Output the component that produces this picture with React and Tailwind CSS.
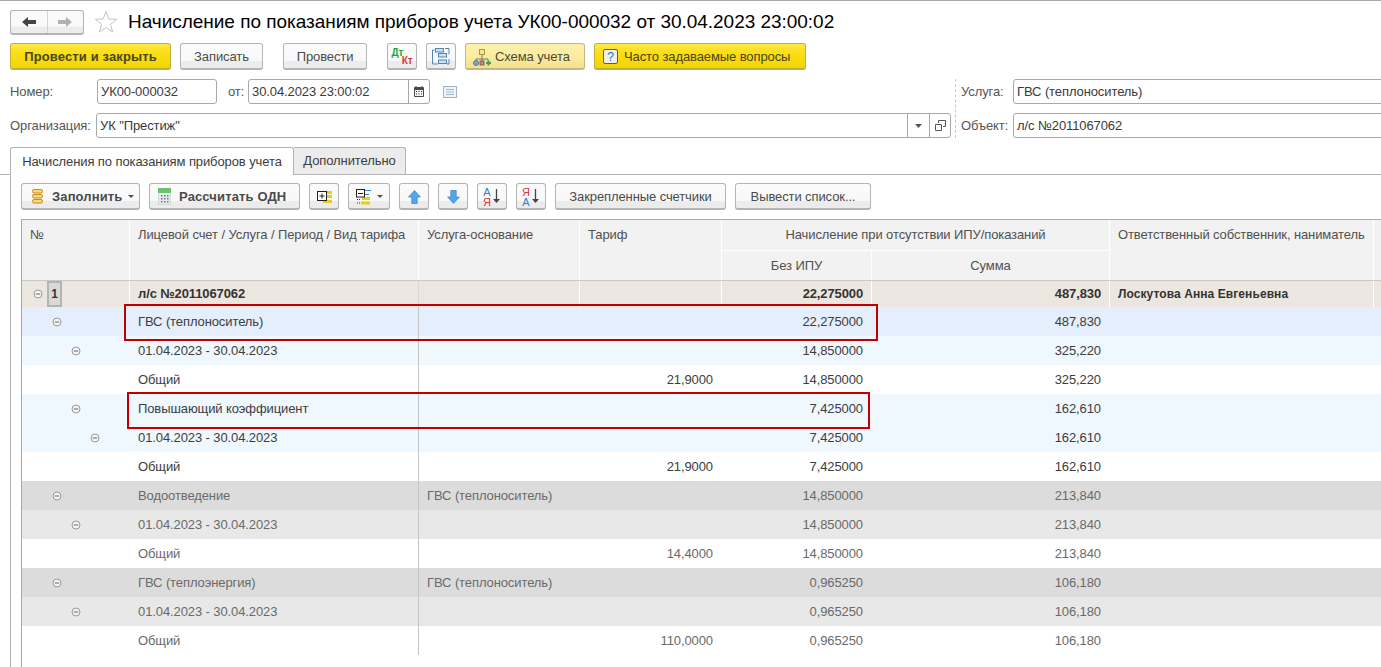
const F = "font-['Liberation_Sans',Arial,sans-serif]";

const Btn = ({ w, children, kind = "n", ml = "", bold = false, pad = "justify-center", gap = "gap-2" }) => {
  const k = {
    n: "bg-[linear-gradient(#fbfbfb_0%,#f8f8f8_70%,#ececec_72%,#ececec_100%)] border-[#b4b4b4] text-[#4a4a4a]",
    y: "bg-[linear-gradient(#ffe94a_0%,#fbe01a_30%,#f2d500_100%)] border-[#c2ad3a] text-[#4a4420]",
    l: "bg-[linear-gradient(#fdf0ac_0%,#fbeca0_50%,#f5e08c_100%)] border-[#c0b888] text-[#4a4a3a]",
  }[kind];
  return (
    <div className={`h-[27px] ${w} ${ml} ${k} ${pad} ${gap} flex items-center pt-[1px] shrink-0 rounded-[3px] border border-b-2 text-[13px] whitespace-nowrap ${bold ? "font-bold tracking-[0.13px]" : ""}`}>
      {children}
    </div>
  );
};

const Minus = ({ x }) => (
  <svg width="10" height="10" viewBox="0 0 10 10" className="shrink-0" style={{ marginLeft: x }}>
    <circle cx="5" cy="5" r="4" fill="#f4f4f4" stroke="#9a9a9a" strokeWidth="1" />
    <path d="M2.8 5h4.400" stroke="#666" strokeWidth="1" />
  </svg>
);

const Back = ({ c, flip }) => (
  <svg width="14" height="10" viewBox="0 0 14 10" style={flip ? { transform: "scaleX(-1)" } : undefined}>
    <path d="M0 5 6 0v3h8v4H6v3z" fill={c} />
  </svg>
);

const Star = () => (
  <svg width="24" height="24" viewBox="0 0 24 24" className="shrink-0">
    <path d="M12 1.500 14.800 9l8 .3-6.300 5 2.200 7.700L12 17.500 5.300 22l2.200-7.700-6.300-5 8-.3z" fill="#fff" stroke="#c4c4c4" strokeWidth="1" />
  </svg>
);

const TreeDoc = () => (
  <svg width="18" height="17" viewBox="0 0 18 17">
    <g fill="#cfe0f0" stroke="#4f86b8" strokeWidth="1">
      <rect x="3.500" y="0.500" width="8" height="3.500" />
      <rect x="6.500" y="5.500" width="8" height="3.500" />
      <rect x="6.500" y="12" width="8" height="3.500" />
    </g>
    <path d="M2.500 2H.5v14h5M13 .5h4v6M17 11v5h-2" stroke="#4f86b8" fill="none" />
  </svg>
);

const Scheme = () => (
  <svg width="18" height="18" viewBox="0 0 18 18" className="shrink-0">
    <path d="M9 7v4M3 13v-2h12v2M9 11v2" stroke="#777" fill="none" />
    <rect x="6.500" y="1.500" width="5" height="5" fill="#f7e68a" stroke="#a59a50" />
    <circle cx="3" cy="15" r="2.500" fill="#7ba3c9" stroke="#55799b" />
    <rect x="7" y="13" width="4" height="4" fill="#c58a72" stroke="#8a5f4e" />
    <path d="M13 15h5M15.500 12.500v5" stroke="#3aa35a" strokeWidth="2" />
  </svg>
);

const Help = () => (
  <div className="w-[15px] h-[15px] shrink-0 rounded-[2px] border border-[#5c5c5c] bg-[#f1efe6] flex items-center justify-center text-[12px] text-[#1a6fc4] leading-none">?</div>
);

const Calendar = () => (
  <svg width="10" height="11" viewBox="0 0 10 11">
    <rect x="0" y="1" width="10" height="10" rx="1" fill="#4a4a4a" />
    <path d="M2 0v2M8 0v2" stroke="#4a4a4a" strokeWidth="1" />
    <rect x="1" y="4" width="8" height="6" fill="#f4f4f4" />
    <path d="M2 5h1v1H2zM4.500 5h1v1h-1zM7 5h1v1H7zM2 7.500h1v1H2zM4.500 7.500h1v1h-1zM7 7.500h1v1H7z" fill="#333" />
  </svg>
);

const Note = () => (
  <svg width="14" height="12" viewBox="0 0 14 12">
    <rect x="0.500" y="0.500" width="13" height="11" fill="#f0f5fa" stroke="#9db6cc" />
    <path d="M3 3.500h8M3 6h8M3 8.500h8" stroke="#9db6cc" />
  </svg>
);

const Stack = () => (
  <svg width="11" height="15" viewBox="0 0 11 15" className="shrink-0">
    {[0.5, 5.5, 10.5].map((y) => (
      <rect key={y} x="0.500" y={y} width="10" height="3.500" rx="1.500" fill="#f6dc6a" stroke="#c88a2b" />
    ))}
  </svg>
);

const Calc = () => (
  <svg width="13" height="17" viewBox="0 0 13 17" className="shrink-0">
    <rect x="0" y="0" width="13" height="17" fill="#e4e8ea" stroke="#a8b0b4" strokeWidth="0.500" />
    <rect x="0" y="0" width="13" height="5" fill="#6fc06f" />
    <path d="M3 7h1.500v1.500H3zM6 7h1.500v1.500H6zM9 7h1.500v1.500H9zM3 10h1.500v1.500H3zM6 10h1.500v1.500H6zM9 10h1.500v1.500H9zM3 13h1.500v1.500H3zM6 13h1.500v1.500H6zM9 13h1.500v1.500H9z" fill="#777" />
  </svg>
);

const Expand = () => (
  <svg width="15" height="12" viewBox="0 0 15 12">
    <path d="M10 0h5v3h-5zM10 4h5v3h-5zM6 9h9v3H6z" fill="#e8cf10" />
    <rect x="0.500" y="0.500" width="9" height="9" fill="#fff" stroke="#222" />
    <path d="M2.500 5h5M5 2.500v5" stroke="#222" />
  </svg>
);

const Collapse = () => (
  <svg width="15" height="16" viewBox="0 0 15 16">
    <path d="M9 1.500h6M9 5.500h4" stroke="#3f85c9" />
    <path d="M6 8h8v3H6zM5 12.500h9v3H5z" fill="#e8cf10" />
    <rect x="0.500" y="0.500" width="8" height="7.500" fill="#fff" stroke="#222" />
    <path d="M2 4.500h5" stroke="#222" />
    <path d="M1 10.500h3M1 14h3" stroke="#333" strokeDasharray="1 1" />
  </svg>
);

const Arrow = ({ down }) => (
  <svg width="13" height="14" viewBox="0 0 12 13" style={down ? { transform: "scaleY(-1)" } : undefined}>
    <path d="M6 .5 11.500 6.500H8.500V12.500H3.500V6.500H.5z" fill="#52a7ea" stroke="#3d87c8" strokeWidth="0.700" />
  </svg>
);

const Sort = ({ top, bottom, topC, botC }) => (
  <div className="flex items-center gap-[1px]">
    <div className="flex flex-col items-center text-[11px] leading-[10px] font-normal">
      <span className={topC}>{top}</span>
      <span className={botC}>{bottom}</span>
    </div>
    <svg width="9" height="15" viewBox="0 0 9 15">
      <path d="M4.500 0v10" stroke="#444" strokeWidth="1.300" />
      <path d="M1 10h7l-3.500 4z" fill="#444" />
    </svg>
  </div>
);

const Field = ({ w, children, ml = "" }) => (
  <div className={`${w} ${ml} h-[25px] shrink-0 flex items-center rounded-[3px] border border-[#a9a9a9] bg-white text-[13px] text-[#3a3a3a] overflow-hidden`}>
    {children}
  </div>
);

const Label = ({ w, children }) => (
  <div className={`${w} shrink-0 text-[13px] text-[#555] whitespace-nowrap`}>{children}</div>
);

const W = ["w-[108px]", "w-[289px]", "w-[161px]", "w-[142px]", "w-[150px]", "w-[238px]", "w-[264px]", "w-[20px]"];

const rows = [
  { h: "h-[26px]", bg: "bg-[#ebe7e0]", c: "text-[#333]", bold: true, l: "л/с №2011067062", x: 11, box: true, b: "22,275000", s: "487,830", o: "Лоскутова Анна Евгеньевна", split: true },
  { bg: "bg-[#e4eefd]", c: "text-[#3d3d3d]", x: 30, l: "ГВС (теплоноситель)", b: "22,275000", s: "487,830" },
  { bg: "bg-[#eff7ff]", c: "text-[#3d3d3d]", x: 49, l: "01.04.2023 - 30.04.2023", b: "14,850000", s: "325,220" },
  { bg: "bg-white", c: "text-[#3d3d3d]", l: "Общий", t: "21,9000", b: "14,850000", s: "325,220" },
  { bg: "bg-[#eff7ff]", c: "text-[#3d3d3d]", x: 49, l: "Повышающий коэффициент", b: "7,425000", s: "162,610" },
  { bg: "bg-[#eff7ff]", c: "text-[#3d3d3d]", x: 68, l: "01.04.2023 - 30.04.2023", b: "7,425000", s: "162,610" },
  { bg: "bg-white", c: "text-[#3d3d3d]", l: "Общий", t: "21,9000", b: "7,425000", s: "162,610" },
  { bg: "bg-[#dcdcdc]", c: "text-[#6a6a6a]", x: 30, l: "Водоотведение", base: "ГВС (теплоноситель)", b: "14,850000", s: "213,840" },
  { bg: "bg-[#e8e8e8]", c: "text-[#6a6a6a]", x: 49, l: "01.04.2023 - 30.04.2023", b: "14,850000", s: "213,840" },
  { bg: "bg-white", c: "text-[#6a6a6a]", l: "Общий", t: "14,4000", b: "14,850000", s: "213,840" },
  { bg: "bg-[#dcdcdc]", c: "text-[#6a6a6a]", x: 30, l: "ГВС (теплоэнергия)", base: "ГВС (теплоноситель)", b: "0,965250", s: "106,180" },
  { bg: "bg-[#e8e8e8]", c: "text-[#6a6a6a]", x: 49, l: "01.04.2023 - 30.04.2023", b: "0,965250", s: "106,180" },
  { bg: "bg-white", c: "text-[#6a6a6a]", l: "Общий", t: "110,0000", b: "0,965250", s: "106,180" },
];

const Row = ({ r }) => {
  const line = r.split ? "border-r border-white" : "";
  const pr = r.split ? "pr-[8px]" : "pr-[9px]";
  return (
    <div className={`flex ${r.h || "h-[29px]"} ${r.bg} ${r.c} ${r.bold ? "font-bold tracking-[-0.12px]" : ""} items-stretch whitespace-nowrap text-[13px]`}>
      <div className={`${W[0]} shrink-0 flex items-center ${line}`}>
        {r.x ? <Minus x={r.x} /> : null}
        {r.box ? (
          <div className="ml-[4px] w-[15px] h-[26px] bg-[#d9d9d9] border-2 border-[#b4b4b4] flex items-center justify-center text-[#333] text-[12px]">1</div>
        ) : null}
      </div>
      <div className={`${W[1]} shrink-0 flex items-center pl-[8px] border-r ${r.split ? "border-[#d8d8d8]" : "border-[#c6c6c6]"}`}>{r.l}</div>
      <div className={`${W[2]} shrink-0 flex items-center pl-[8px] ${line}`}>{r.base}</div>
      <div className={`${W[3]} shrink-0 flex items-center justify-end ${pr} ${line}`}>{r.t}</div>
      <div className={`${W[4]} shrink-0 flex items-center justify-end ${pr} ${line}`}>{r.b}</div>
      <div className={`${W[5]} shrink-0 flex items-center justify-end ${pr} ${line}`}>{r.s}</div>
      <div className={`${W[6]} shrink-0 flex items-center pl-[8px] text-[12px] tracking-[0.08px] ${line}`}>{r.o}</div>
      <div className="flex-1" />
    </div>
  );
};

const Head = ({ w, children }) => (
  <div className={`${w} shrink-0 border-r border-white pl-[8px] pt-[5px]`}>{children}</div>
);

const Caret = () => (
  <svg width="6" height="3" viewBox="0 0 6 3" className="shrink-0"><path d="M0 0h6L3 3z" fill="#555" /></svg>
);

export default function App() {
  return (
    <div className={`${F} relative w-[1381px] h-[667px] overflow-hidden bg-white border-t border-[#a8a8a8] text-[13px] tracking-[-0.1px]`}>
      {/* Title line */}
      <div className="flex items-center pl-[10px] pt-[8px] h-[34px]">
        <div className="flex h-[25px] w-[74px] rounded-[3px] border border-[#b4b4b4] border-b-2 bg-[linear-gradient(#fbfbfb_0%,#f8f8f8_70%,#ececec_72%,#ececec_100%)]">
          <div className="flex-1 flex items-center justify-center border-r border-[#d4d4d4]"><Back c="#444" /></div>
          <div className="flex-1 flex items-center justify-center"><Back c="#b0b0b0" flip /></div>
        </div>
        <div className="ml-[10px]"><Star /></div>
        <div className="ml-[10px] text-[19px] text-black whitespace-nowrap tracking-[-0.03px]">
          Начисление по показаниям приборов учета УК00-000032 от 30.04.2023 23:00:02
        </div>
      </div>

      {/* Main toolbar */}
      <div className="flex items-center gap-[9px] pl-[10px] mt-[8px]">
        <Btn w="w-[161px]" kind="y" bold>Провести и закрыть</Btn>
        <Btn w="w-[83px]">Записать</Btn>
        <Btn w="w-[84px]" ml="ml-[11px]">Провести</Btn>
        <Btn w="w-[30px]" ml="ml-[11px]">
          <div className="relative w-[21px] h-[18px] text-[10px] leading-[10px] font-bold">
            <span className="absolute left-0 top-0 text-[#17a34a]">Дт</span>
            <span className="absolute right-0 bottom-0 text-[#d23b3b]">Кт</span>
          </div>
        </Btn>
        <Btn w="w-[30px]"><TreeDoc /></Btn>
        <Btn w="w-[120px]" kind="l" pad="pl-[7px]" gap="gap-[4px]"><Scheme /><span>Схема учета</span></Btn>
        <Btn w="w-[212px]" kind="y" pad="pl-[8px]" gap="gap-[6px]"><Help /><span>Часто задаваемые вопросы</span></Btn>
      </div>

      {/* Form */}
      <div className="flex pl-[10px] mt-[9px]">
        <div className="w-[945px] shrink-0">
          <div className="flex items-center h-[25px]">
            <Label w="w-[87px]">Номер:</Label>
            <Field w="w-[120px]"><span className="pl-[3px]">УК00-000032</span></Field>
            <Label w="w-[31px] pl-[11px]">от:</Label>
            <Field w="w-[182px]">
              <span className="pl-[3px] flex-1">30.04.2023 23:00:02</span>
              <span className="w-[21px] h-full border-l border-[#a9a9a9] flex items-center justify-center"><Calendar /></span>
            </Field>
            <div className="ml-[13px] flex"><Note /></div>
          </div>
          <div className="flex items-center h-[25px] mt-[9px]">
            <Label w="w-[86px]">Организация:</Label>
            <Field w="w-[855px]">
              <span className="pl-[3px] flex-1">УК "Престиж"</span>
              <span className="w-[22px] h-full border-l border-[#a9a9a9] flex items-center justify-center">
                <svg width="7" height="4" viewBox="0 0 7 4"><path d="M0 0h7L3.500 4z" fill="#555" /></svg>
              </span>
              <span className="w-[21px] h-full border-l border-[#a9a9a9] flex items-center justify-center">
                <svg width="11" height="11" viewBox="0 0 11 11"><path d="M3.500 3V.5h7v6H8M.5 4.500h6v6h-6z" fill="none" stroke="#555" /></svg>
              </span>
            </Field>
          </div>
        </div>
        <div className="border-l border-dashed border-[#c8c8c8] pl-[5px] flex-1 min-w-0">
          <div className="flex items-center h-[25px]">
            <Label w="w-[52px]">Услуга:</Label>
            <Field w="w-[380px]"><span className="pl-[3px]">ГВС (теплоноситель)</span></Field>
          </div>
          <div className="flex items-center h-[25px] mt-[9px]">
            <Label w="w-[52px]">Объект:</Label>
            <Field w="w-[380px]"><span className="pl-[3px]">л/с №2011067062</span></Field>
          </div>
        </div>
      </div>

      {/* Tabs */}
      <div className="flex pl-[10px] mt-[9px] h-[28px] border-b border-[#b4b4b4] text-[13px] text-[#3d3d3d]">
        <div className="relative z-10 w-[284px] h-[28px] bg-white border border-b-0 border-[#b4b4b4] rounded-t-[3px] flex items-center justify-center">
          Начисления по показаниям приборов учета
        </div>
        <div className="w-[112px] h-[27px] bg-[#ececec] border border-l-0 border-b-0 border-[#b4b4b4] rounded-tr-[3px] flex items-center justify-center">
          Дополнительно
        </div>
      </div>

      {/* Tab body */}
      <div className="ml-[10px] border-l border-[#b4b4b4] pl-[10px] h-[600px]">
        <div className="flex items-center gap-[9px] pt-[8px]">
          <Btn w="w-[119px]" bold pad="pl-[10px]" gap="gap-[9px]">
            <Stack /><span>Заполнить</span>
            <span className="-ml-[3px]"><Caret /></span>
          </Btn>
          <Btn w="w-[151px]" bold pad="pl-[8px]" gap="gap-[8px]"><Calc /><span>Рассчитать ОДН</span></Btn>
          <Btn w="w-[30px]"><Expand /></Btn>
          <Btn w="w-[42px]" gap="gap-[6px]"><Collapse /><Caret /></Btn>
          <Btn w="w-[30px]"><Arrow /></Btn>
          <Btn w="w-[30px]"><Arrow down /></Btn>
          <Btn w="w-[30px]"><Sort top="А" bottom="Я" topC="text-[#2f7fc9]" botC="text-[#cf3a3a]" /></Btn>
          <Btn w="w-[30px]"><Sort top="Я" bottom="А" topC="text-[#cf3a3a]" botC="text-[#2f7fc9]" /></Btn>
          <Btn w="w-[171px]">Закрепленные счетчики</Btn>
          <Btn w="w-[136px]">Вывести список...</Btn>
        </div>

        {/* Table */}
        <div className="mt-[9px] border-l border-t border-[#a8a8a8] h-[500px]">
          <div className="flex h-[61px] bg-[#f2f2f2] border-b border-[#c8c8c8] text-[13px] text-[#505050] whitespace-nowrap">
            <Head w={W[0]}>№</Head>
            <Head w={W[1]}>Лицевой счет / Услуга / Период / Вид тарифа</Head>
            <Head w={W[2]}>Услуга-основание</Head>
            <Head w={W[3]}>Тариф</Head>
            <div className="w-[388px] shrink-0 flex flex-col">
              <div className="h-[31px] border-b border-r border-white pt-[5px] text-center">Начисление при отсутствии ИПУ/показаний</div>
              <div className="flex flex-1">
                <div className={`${W[4]} border-r border-white pt-[5px] text-center`}>Без ИПУ</div>
                <div className={`${W[5]} border-r border-white pt-[5px] text-center`}>Сумма</div>
              </div>
            </div>
            <Head w={W[6]}>Ответственный собственник, наниматель</Head>
          </div>
          {rows.map((r, i) => (
            <Row key={i} r={r} />
          ))}
        </div>
      </div>

      {/* Red highlights over the table */}
      <div className="absolute left-[124px] top-[303px] w-[754px] h-[37px] border-2 border-[#c00000]" />
      <div className="absolute left-[127px] top-[391px] w-[743px] h-[37px] border-2 border-[#c00000]" />
    </div>
  );
}
